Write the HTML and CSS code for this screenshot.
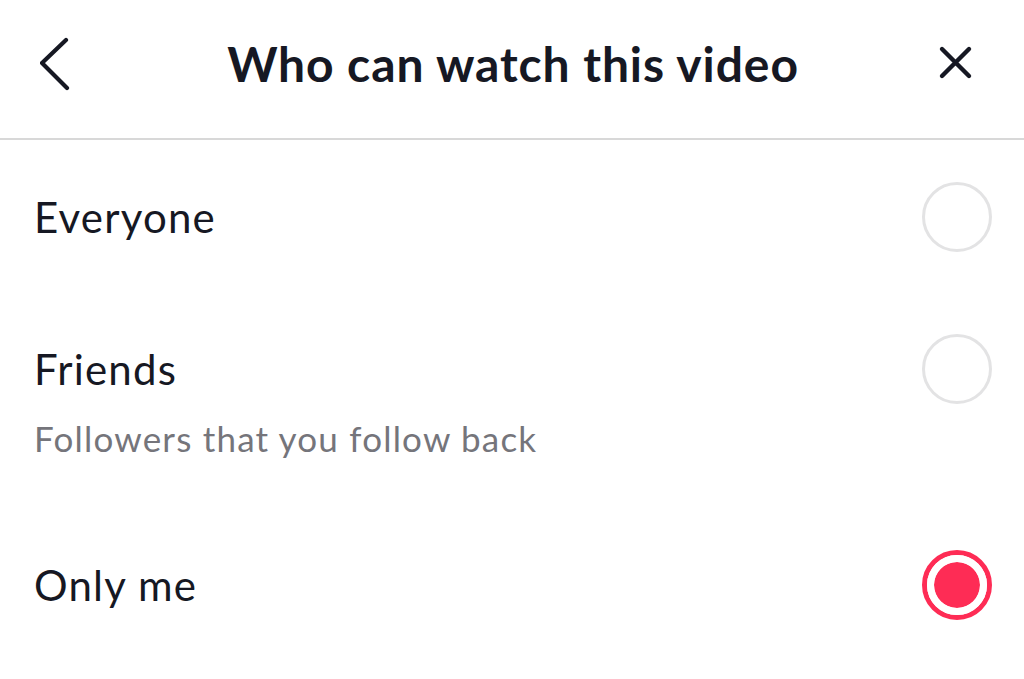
FILE: index.html
```html
<!DOCTYPE html>
<html lang="en">
<head>
  <meta charset="UTF-8">
  <meta name="viewport" content="width=device-width, initial-scale=1.0">
  <title>Who can watch this video</title>
  <link rel="stylesheet" href="styles.css">
</head>
<body>
  <div class="sheet">
    <header class="top-bar">
      <button class="icon-btn back-btn" aria-label="Back">
        <svg width="40" height="60" viewBox="0 0 40 60">
          <polyline points="26,3 2,26 27,51" fill="none" stroke="#161823" stroke-width="4.2" stroke-linecap="round" stroke-linejoin="round"/>
        </svg>
      </button>
      <h1>Who can watch this video</h1>
      <button class="icon-btn close-btn" aria-label="Close">
        <svg width="40" height="40" viewBox="0 0 40 40">
          <path d="M6 6 L33 33 M33 6 L6 33" fill="none" stroke="#161823" stroke-width="4.4" stroke-linecap="round"/>
        </svg>
      </button>
    </header>

    <ul class="options">
      <li class="option">
        <div class="option-text">
          <span class="option-title">Everyone</span>
        </div>
        <span class="radio"></span>
      </li>
      <li class="option">
        <div class="option-text">
          <span class="option-title">Friends</span>
          <span class="option-desc">Followers that you follow back</span>
        </div>
        <span class="radio"></span>
      </li>
      <li class="option">
        <div class="option-text">
          <span class="option-title">Only me</span>
        </div>
        <span class="radio checked"></span>
      </li>
    </ul>
  </div>
</body>
</html>
```

FILE: styles.css
```css
body { margin: 0; background: #fff; color: #161823; font-family: Lato, "Open Sans", sans-serif; }
.sheet { width: 1024px; height: 679px; overflow: hidden; background: #fff; }

.top-bar { height: 140px; box-sizing: border-box; padding-bottom: 12px; display: flex; align-items: center; border-bottom: 2px solid #d8d8d8; }
.top-bar h1 { flex: 1; margin: 0; padding-left: 10px; text-align: center; font-size: 48px; font-weight: 700; letter-spacing: 0.9px; color: #161823; }
.icon-btn { background: none; border: none; padding: 0; margin: 0; cursor: pointer; display: flex; }
.back-btn { margin-left: 40px; margin-top: 8px; }
.close-btn { margin-right: 48px; }

.options { list-style: none; margin: 0; padding: 42px 32px 0 34px; display: flex; flex-direction: column; gap: 82px; }
.option { display: flex; justify-content: space-between; align-items: flex-start; }
.option-text { display: flex; flex-direction: column; }
.option-title { font-size: 42px; line-height: 70px; letter-spacing: 1.2px; color: #161823; }
.option-desc { font-size: 35px; line-height: 52px; letter-spacing: 1.2px; margin: 8px 0 4px; color: #75757b; }

.radio { width: 70px; height: 70px; box-sizing: border-box; border: 3.5px solid #e3e3e4; border-radius: 50%; }
.radio.checked { border: 5px solid #fe2c55; padding: 7px; background: #fe2c55; background-clip: content-box; position: relative; }
.radio.checked::before { content: ""; position: absolute; inset: 0; border-radius: 50%; border: 7px solid #fff; }
```
